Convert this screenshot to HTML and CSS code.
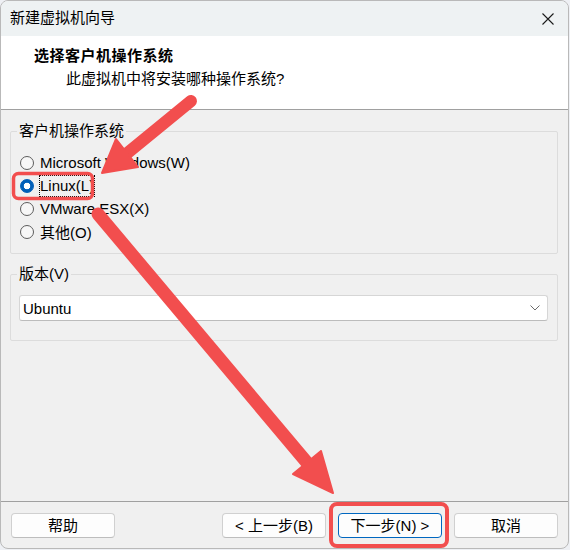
FILE: index.html
```html
<!DOCTYPE html>
<html lang="zh-CN">
<head>
    <meta charset="UTF-8" />
    <title>新建虚拟机向导</title>
    <link rel="stylesheet" href="styles.css">
</head>
<body>
    <div class="window">
      <div class="titlebar">
        <span class="title">新建虚拟机向导</span>
        <svg class="close" width="12" height="12" viewBox="0 0 12 12">
          <path d="M0.5 0.5 L11.5 11.5 M11.5 0.5 L0.5 11.5" stroke="#1b1b1b" stroke-width="1.1" fill="none" />
        </svg>
      </div>

      <div class="header">
        <div class="head-title">选择客户机操作系统</div>
        <div class="head-sub">此虚拟机中将安装哪种操作系统?</div>
      </div>

      <div class="content">
        <fieldset class="group group-os">
          <legend>客户机操作系统</legend>
          <div class="options">
            <div class="radio-row"><span class="radio"></span><span>Microsoft Windows(W)</span></div>
            <div class="radio-row"><span class="radio checked"></span><span class="focus">Linux(L)</span></div>
            <div class="radio-row"><span class="radio"></span><span>VMware ESX(X)</span></div>
            <div class="radio-row"><span class="radio"></span><span>其他(O)</span></div>
          </div>
        </fieldset>

        <fieldset class="group group-version">
          <legend>版本(V)</legend>
          <div class="select">
            <span>Ubuntu</span>
            <svg width="10" height="6" viewBox="0 0 10 6">
              <path d="M0.5 0.5 L5 5 L9.5 0.5" stroke="#6b6b6b" stroke-width="1" fill="none" />
            </svg>
          </div>
        </fieldset>
      </div>

      <div class="footer">
        <button class="btn btn-help">帮助</button>
        <button class="btn">&lt; 上一步(B)</button>
        <button class="btn btn-default">下一步(N) &gt;</button>
        <button class="btn">取消</button>
      </div>
    </div>

    <!-- annotations drawn over the dialog -->
    <svg class="marks" width="570" height="550" viewBox="0 0 570 550">
      <g fill="#f24e4e" stroke="#f24e4e">
        <line x1="191" y1="101" x2="125" y2="155" stroke-width="12" stroke-linecap="round" />
        <polygon points="116,139 102,173 138,167" stroke-width="2" stroke-linejoin="round" />
        <line x1="98" y1="214" x2="309" y2="465" stroke-width="13" stroke-linecap="round" />
        <polygon points="293,474 333,493 321,451" stroke-width="2" stroke-linejoin="round" />
      </g>
      <g fill="none" stroke="#f24e4e">
        <rect x="13.5" y="173.5" width="79" height="25" rx="5" stroke-width="3.5" />
        <rect x="331" y="504" width="116" height="42" rx="6" stroke-width="4" />
      </g>
    </svg>
</body>
</html>
```

FILE: styles.css
```css
body {
    margin: 0;
    width: 570px;
    height: 550px;
    background-color: #eef0f4;
    font-family: "Liberation Sans", "Noto Sans CJK SC", sans-serif;
    font-size: 15px;
    color: #000;
    position: relative;
    overflow: hidden;
}

.window {
    width: 569px;
    height: 549px;
    box-sizing: border-box;
    border: 1px solid #b9b9b9;
    border-radius: 8px;
    background-color: #f0f0f0;
    display: flex;
    flex-direction: column;
    overflow: hidden;
}

.titlebar {
    height: 35px;
    flex-shrink: 0;
    background-color: #eef2f3;
    display: flex;
    align-items: center;
    justify-content: space-between;
    padding: 0 14px 0 9px;
}

.title {
    line-height: 20px;
    margin-top: -2px;
}

.close {
    display: block;
}

.header {
    height: 74px;
    box-sizing: border-box;
    flex-shrink: 0;
    background-color: #ffffff;
    border-bottom: 1px solid #a0a0a0;
    padding-top: 9px;
}

.head-title {
    font-weight: bold;
    line-height: 22px;
    padding-left: 33px;
    letter-spacing: 0.5px;
}

.head-sub {
    line-height: 22px;
    padding-left: 65px;
    margin-top: 1px;
}

.content {
    flex: 1;
    padding: 11px 10px 0 9px;
}

.group {
    margin: 0;
    border: 1px solid #dcdcdc;
    border-radius: 2px;
    padding: 0;
    min-width: 0;
}

.group legend {
    margin-left: 6px;
    padding: 0 2px;
    line-height: 20px;
}

.group-os {
    padding: 10px 0;
}

.options {
    padding-left: 9px;
}

.group-version {
    margin-top: 10px;
    padding: 11px 0 19px;
}

.radio-row {
    height: 23px;
    display: flex;
    align-items: center;
    gap: 6px;
}

.radio {
    width: 12px;
    height: 12px;
    border: 1px solid #5c5c5c;
    border-radius: 50%;
    background-color: #f7f7f7;
    flex-shrink: 0;
}

.radio.checked {
    border-color: #005fb8;
    background: radial-gradient(circle, #ffffff 0 3px, #005fb8 3.6px);
}

.focus {
    outline: 1px dotted #000;
    outline-offset: 0;
    line-height: 20px;
}

.select {
    height: 26px;
    box-sizing: border-box;
    margin: 0 9px 0 8px;
    background-color: #ffffff;
    border: 1px solid #d6d6d6;
    border-bottom-color: #bcbcbc;
    border-radius: 3px;
    display: flex;
    align-items: center;
    justify-content: space-between;
    padding: 0 7px 0 3px;
}

.select svg {
    display: block;
}

.footer {
    height: 47px;
    box-sizing: border-box;
    flex-shrink: 0;
    border-top: 1px solid #a0a0a0;
    display: flex;
    align-items: flex-start;
    gap: 12px;
    padding: 11px 10px 0 10px;
}

.btn {
    width: 104px;
    height: 25px;
    box-sizing: border-box;
    border: 1px solid #d0d0d0;
    border-bottom-color: #bdbdbd;
    border-radius: 4px;
    background-color: #fdfdfd;
    font-family: "Liberation Sans", "Noto Sans CJK SC", sans-serif;
    font-size: 15px;
    color: #000;
    padding: 0;
    line-height: 22px;
}

.btn-help {
    margin-right: auto;
}

.btn-default {
    border: 1px solid #0067c0;
}

.marks {
    position: absolute;
    left: 0;
    top: 0;
    pointer-events: none;
}
```
